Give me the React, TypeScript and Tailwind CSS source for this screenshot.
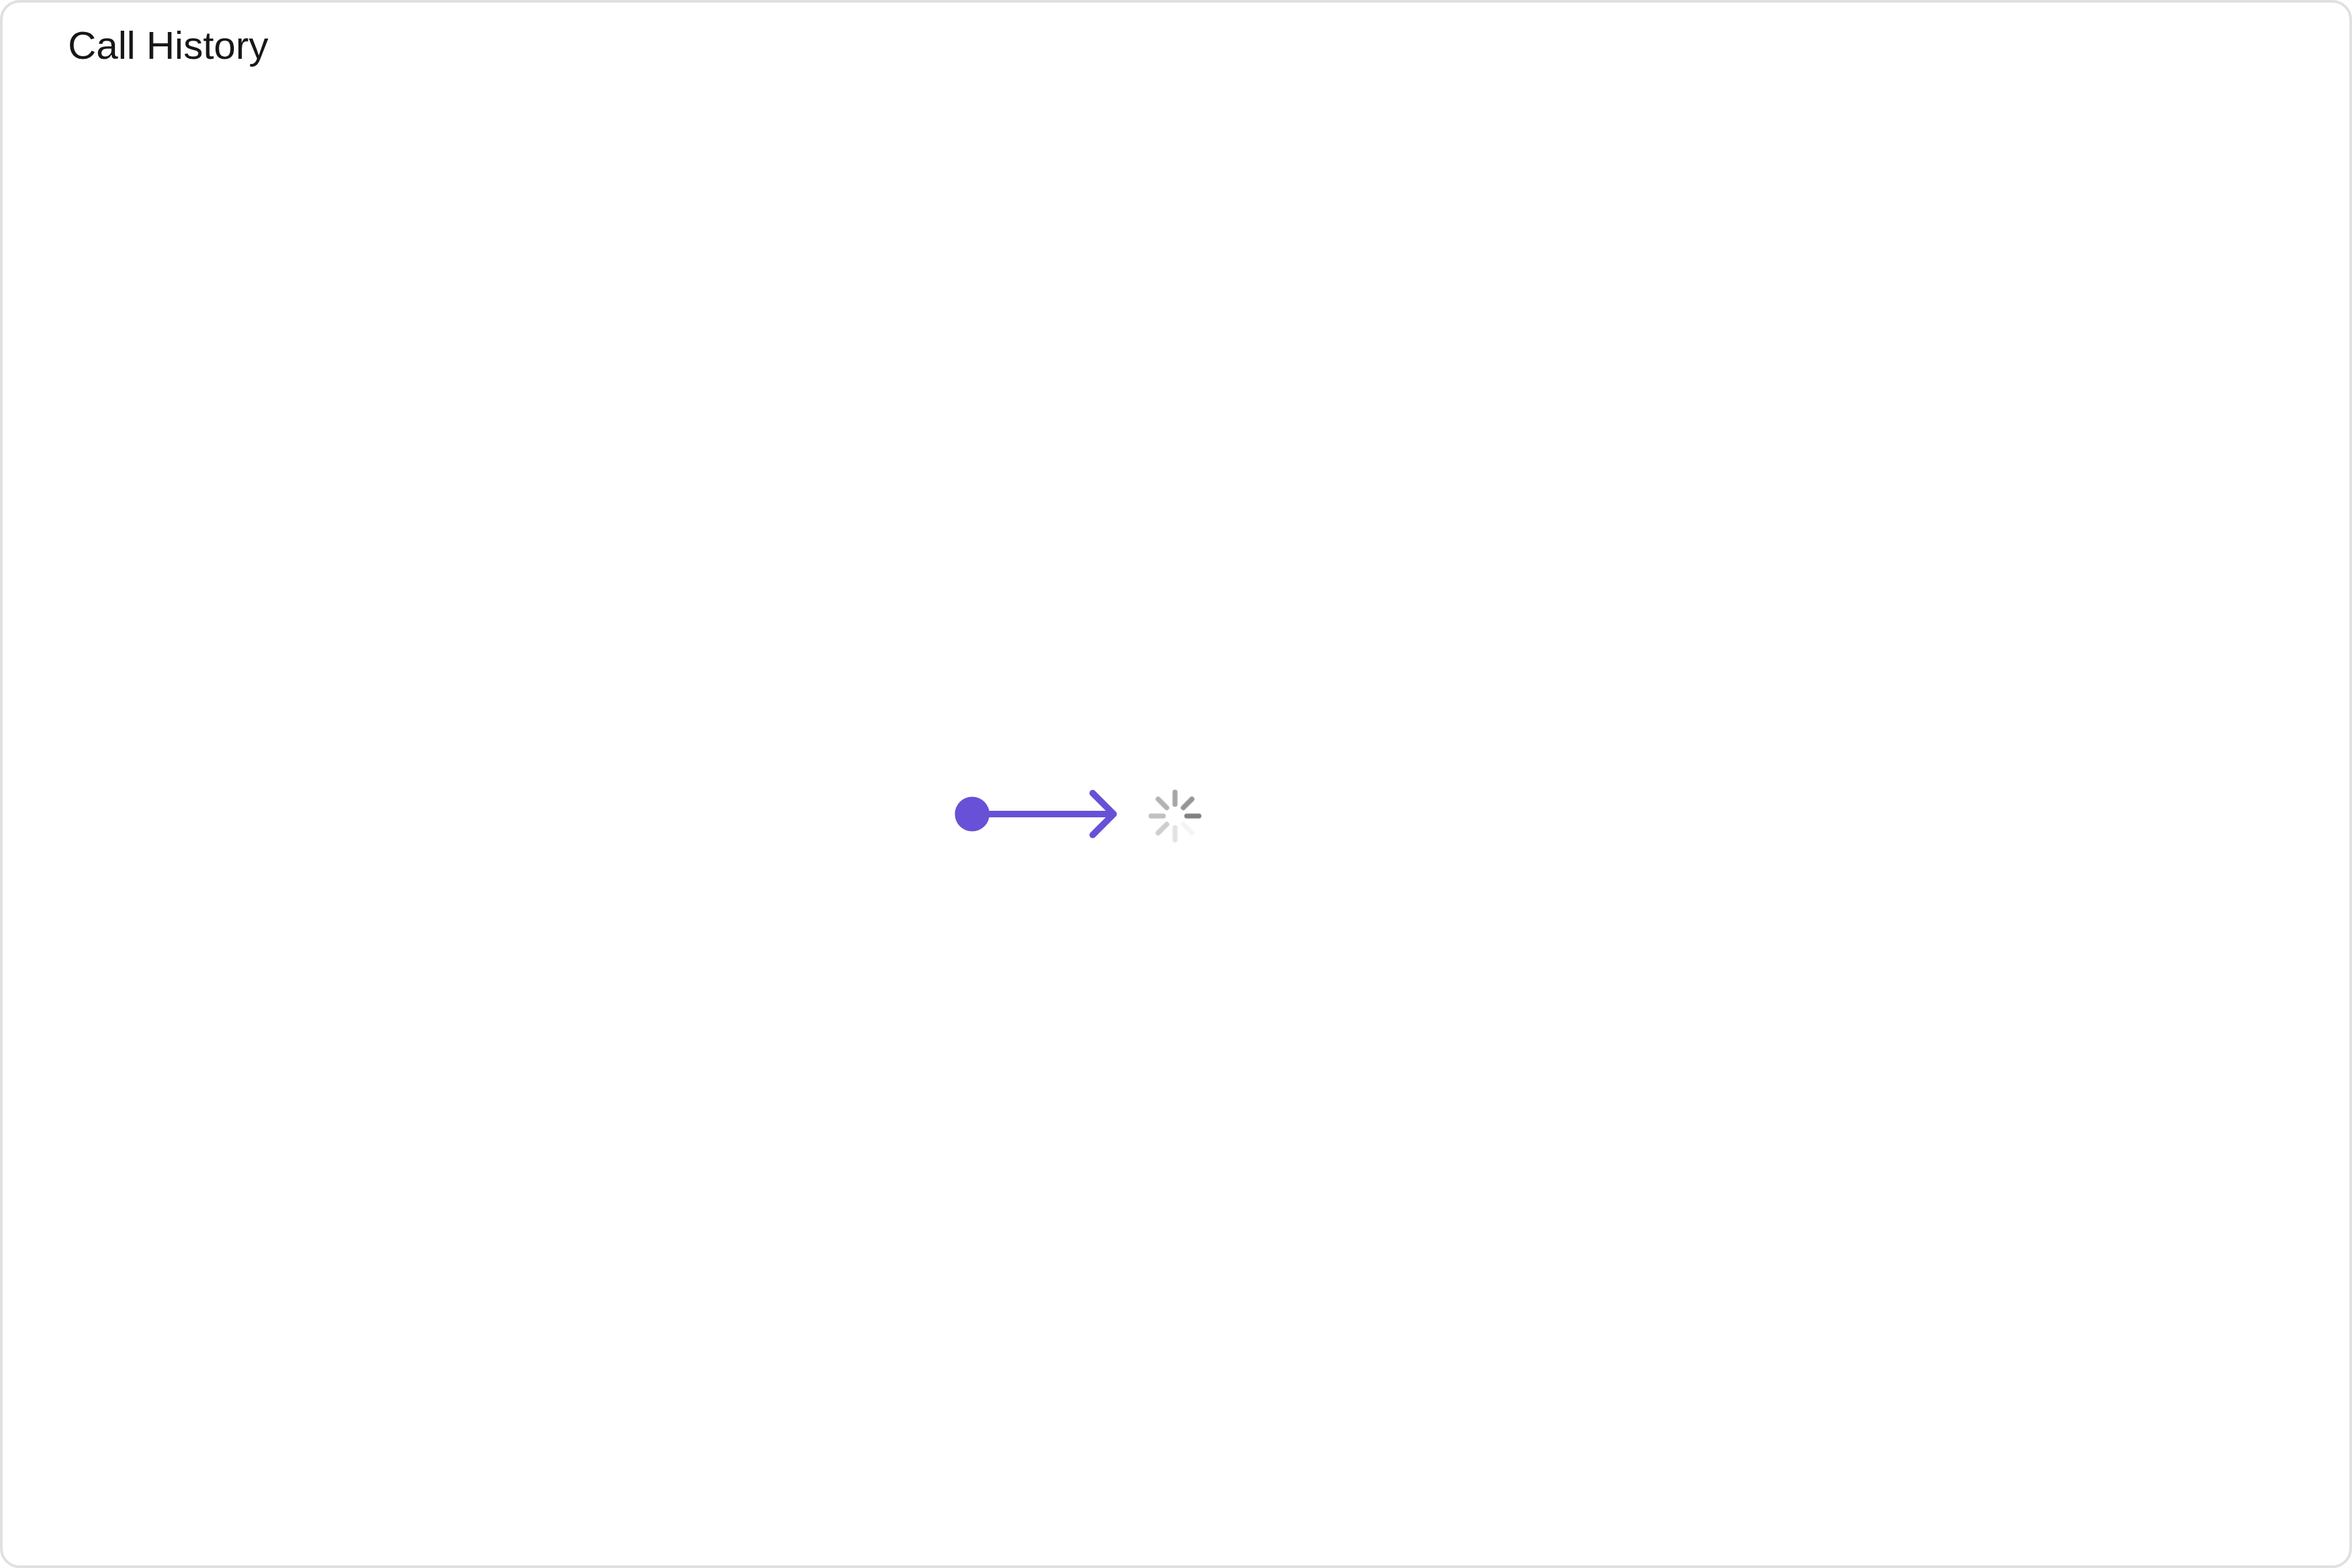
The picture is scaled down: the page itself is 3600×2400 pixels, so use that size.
const ticks: [number, string, string][] = [
  [0, "#a2a2a2", "#808080"],
  [-45, "#a6a6a6", "#969696"],
  [-90, "#b4b4b4", "#a6a6a6"],
  [-135, "#c0c0c0", "#b3b3b3"],
  [180, "#cccccc", "#c0c0c0"],
  [135, "#d6d6d6", "#cecece"],
  [90, "#e8e8e8", "#e2e2e2"],
  [45, "#f8f8f8", "#f4f4f4"],
];

function Spinner() {
  return (
    <svg role="img" aria-label="Loading" className="size-21" viewBox="0 0 84 84" fill="none">
      {ticks.map(([angle, edge, core]) => (
        <g key={angle} transform={`translate(40.5 42) rotate(${angle})`} strokeLinecap="round">
          <path d="M18 0H36.5" stroke={edge} strokeWidth="8" />
          <path d="M17.500 0H37" stroke={core} strokeWidth="5.5" />
        </g>
      ))}
    </svg>
  );
}

function Pointer() {
  return (
    <svg
      aria-hidden="true"
      className="absolute right-full top-0 mr-12 h-20 w-63"
      viewBox="0 0 252 80"
      fill="none"
      stroke="#6851d6"
      strokeWidth="10"
      strokeLinecap="round"
      strokeLinejoin="round"
    >
      <circle cx="30" cy="39" r="26.5" fill="#6851d6" stroke="none" />
      <path d="M30 39H246M214.500 7L246.500 39L214.500 71" />
    </svg>
  );
}

export default function App() {
  return (
    <section className="flex min-h-screen flex-col rounded-[30px] border-4 border-[#e0e0e0] bg-white font-['Liberation_Sans',sans-serif] text-[#171717]">
      <header className="px-[100px] pt-8">
        <h1 className="text-[60px] leading-[67px]">Call History</h1>
      </header>
      <main className="flex grow items-center justify-center pb-px">
        <div className="relative">
          <Pointer />
          <Spinner />
        </div>
      </main>
    </section>
  );
}
